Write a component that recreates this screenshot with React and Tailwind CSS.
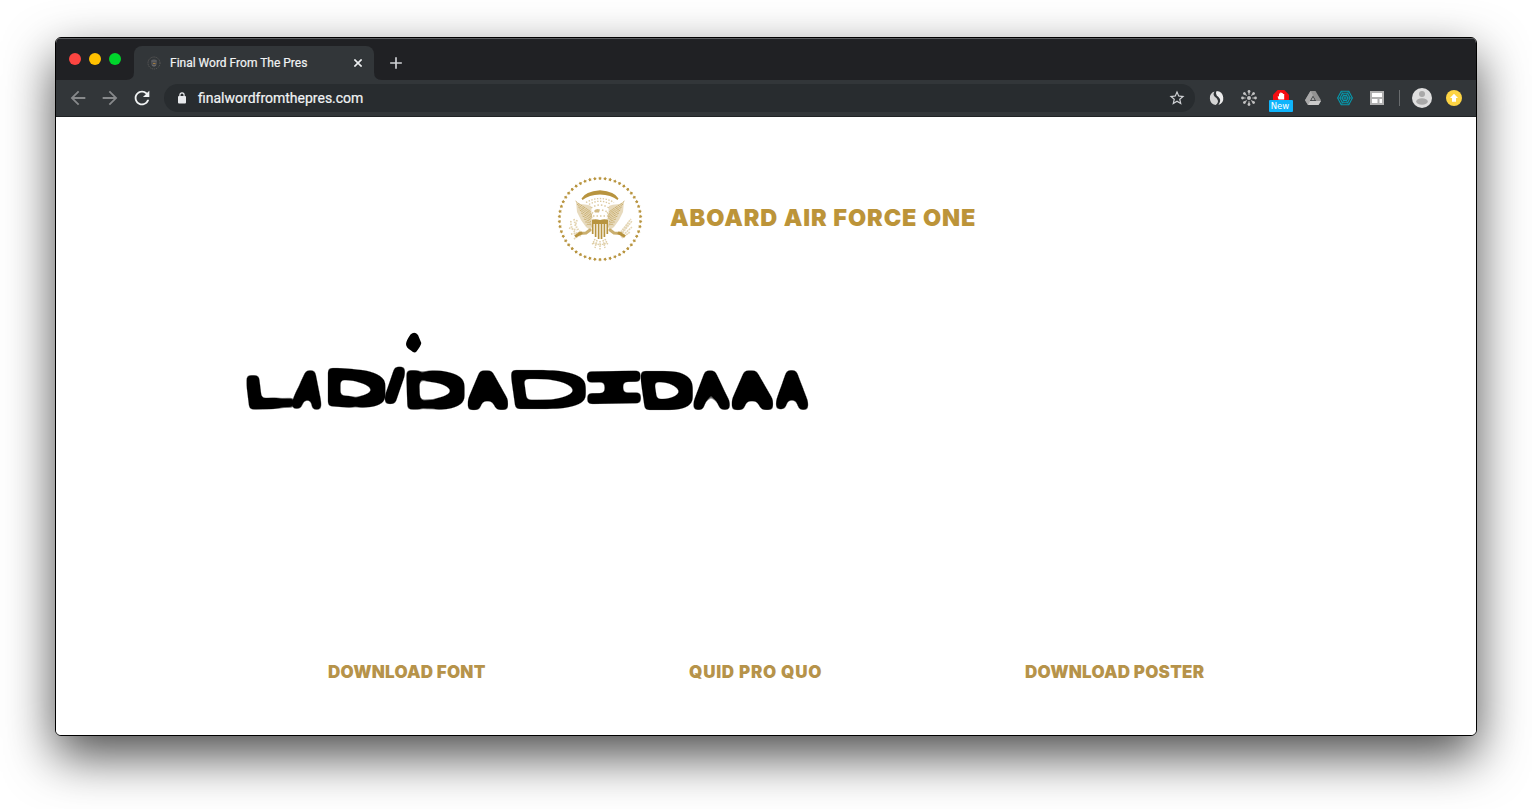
import { MdArrowBack, MdArrowForward, MdRefresh, MdStarBorder, MdAdd } from "react-icons/md";

const gold = "#b8943f";

function starPoints(cx, cy, r, turn) {
  return Array.from({ length: 10 }, (_, i) => {
    const a = turn + (i * Math.PI) / 5;
    const q = i % 2 ? r * 0.6 : r;
    return `${(cx + q * Math.sin(a)).toFixed(2)},${(cy - q * Math.cos(a)).toFixed(2)}`;
  }).join(" ");
}

function Seal() {
  const ring = Array.from({ length: 50 }, (_, i) => (i * 2 * Math.PI) / 50);
  const feathers = Array.from({ length: 9 }, (_, i) => i);
  const wing = (
    <g>
      <path d="M19 25 C22 30 29 27 34 30 L37 40 L36 49 L33 54 L29 51 L24 44 L20 36 Z" fill="#b8943f" opacity=".34" />
      {feathers.map((i) => (
        <path
          key={i}
          d={`M${18.5 + i * 1.4} ${25 + i * 3} C${23 + i} ${29 + i * 2.4} 29 ${32 + i * 2} 34 ${36 + i * 1.6}`}
          fill="none"
          stroke="#b8943f"
          strokeWidth="1"
          strokeDasharray="2.600 .5"
          opacity=".6"
        />
      ))}
      <path d="M33 54 L29 57 L22 57.500" fill="none" stroke="#b8943f" strokeWidth="3" strokeLinecap="round" opacity=".75" />
      <path d="M25 56.500 L18 60.500" stroke="#b8943f" strokeWidth="3" />
    </g>
  );
  return (
    <svg width="86" height="86" viewBox="0 0 86 86" className="block shrink-0">
      {ring.map((a) => (
        <polygon key={a} fill={gold} points={starPoints(43 + 40.6 * Math.sin(a), 43 - 40.6 * Math.cos(a), 1.9, a)} />
      ))}
      <path d="M24.500 22.500 Q28 15.500 43 14.200 Q58 15.500 61.500 22.500 L60.500 24 Q54 18.600 43 18.400 Q32 18.600 25.500 24 Z" fill={gold} />
      <path d="M29 26.500 Q43 18.500 57 26.500 M32 28.500 Q43 22 54 28.500" fill="none" stroke={gold} strokeWidth="1.3" strokeDasharray="1.4 1.5" opacity=".5" />
      {wing}
      <g transform="translate(86 0) scale(-1 1)">{wing}</g>
      <path d="M34 30 Q43 23 52 30 L51 43 H35 Z" fill="#fff" opacity=".85" />
      <path d="M34 32 Q43 26 52 32 M36 40 H51 M45 34 L51 36" fill="none" stroke={gold} strokeWidth="1.500" strokeDasharray="1.500 2" opacity=".5" />
      <path d="M37 35 Q39 32 43 33.500 L42 36.500 L38 36.500 Z" fill={gold} opacity=".65" />
      <path d="M35 42 Q33 39 36 36 M51 43 Q53 39 50 36" stroke={gold} fill="none" opacity=".5" />
      <path d="M35 44 Q38 42.500 43 44 Q48 42.500 51 44 V48.500 H35 Z" fill={gold} />
      <path d="M35 48 V57 Q37 61 43 63.500 Q49 61 51 57 V48" fill="#fff" />
      <path d="M35.700 48 V58 M38.600 48 V61 M41.600 48 V63 M44.500 48 V63 M47.400 48 V61 M50.300 48 V58" stroke={gold} strokeWidth="1.700" />
      <path d="M14 45 C13 51 17 57 24 60 M17 43 C18 49 20 54 26 58 M12 52 L20 54 M14 58 L22 57 M20 44 L18 50 M17 63 L24 58" fill="none" stroke={gold} strokeWidth="1.800" strokeDasharray="1.500 1.100" opacity=".4" />
      <path d="M62 58 L74 43 M63 59 L72 46 M64 59 L75 45 M64 61 L75 51 M65 62 L73 56" fill="none" stroke={gold} strokeWidth="1.500" strokeDasharray="2 .6" opacity=".38" />
      <path d="M38 63 L35 69 M40 64 L38 72 M43 65 V74 M46 64 L48 72 M48 63 L51 69 M36 67 Q43 70 50 67" fill="none" stroke={gold} strokeWidth="1.500" strokeDasharray="1.500 .8" opacity=".45" />
    </svg>
  );
}

// Box of each marker letter: character, left, right, top, bottom, slant and rotation in degrees.
const letters = [
  { c: "L", l: 247, r: 294, t: 374, b: 409, k: 5, w: -2 },
  { c: "A", l: 293, r: 324, t: 370, b: 410, k: -4, w: 3, thin: true },
  { c: "D", l: 327, r: 386, t: 369, b: 408, k: 4, w: 4 },
  { c: "I", l: 389, r: 401, t: 366, b: 404, k: -19, w: 0, thin: true },
  { c: "D", l: 406, r: 465, t: 370, b: 410, k: 3, w: 1 },
  { c: "A", l: 466, r: 508, t: 370, b: 410, k: 4, w: 0 },
  { c: "D", l: 512, r: 586, t: 369, b: 409, k: 8, w: 0, thin: true },
  { c: "I", l: 586, r: 642, t: 371, b: 404, k: 0, w: -1, mono: true, thin: true },
  { c: "D", l: 642, r: 693, t: 370, b: 410, k: 8, w: 0 },
  { c: "A", l: 692, r: 730, t: 370, b: 410, k: 3, w: 0, thin: true },
  { c: "A", l: 730, r: 773, t: 370, b: 410, k: 4, w: 0 },
  { c: "A", l: 775, r: 809, t: 370, b: 410, k: 3, w: 2, thin: true },
];

function inkBox(char, font) {
  const ctx = document.createElement("canvas").getContext("2d");
  ctx.font = font;
  const m = ctx.measureText(char);
  return { left: -m.actualBoundingBoxLeft, right: m.actualBoundingBoxRight, top: m.actualBoundingBoxAscent };
}

function Handwriting() {
  return (
    <svg width="590" height="130" viewBox="233 310 590 130" className="block overflow-visible">
      <filter id="marker" x="233" y="310" width="590" height="130" filterUnits="userSpaceOnUse">
        <feMorphology operator="dilate" radius="5" />
        <feGaussianBlur stdDeviation="2.200" />
        <feComponentTransfer>
          <feFuncA type="linear" slope="5" intercept="-2" />
        </feComponentTransfer>
      </filter>
      <filter id="marker-thin" x="233" y="310" width="590" height="130" filterUnits="userSpaceOnUse">
        <feMorphology operator="dilate" radius="4" />
        <feGaussianBlur stdDeviation="1.900" />
        <feComponentTransfer>
          <feFuncA type="linear" slope="5" intercept="-2" />
        </feComponentTransfer>
      </filter>
      {letters.map((g, i) => {
        const pen = g.thin ? 8.5 : 10.5;
        const family = g.mono ? "Liberation Mono" : "Roboto";
        const weight = g.mono ? 400 : 100;
        const ink = inkBox(g.c, `${weight} 100px ${family}`);
        const sx = (g.r - g.l - pen) / (ink.right - ink.left);
        const sy = (g.b - g.t - pen) / ink.top;
        const mid = (g.l + g.r) / 2;
        const cy = (g.t + g.b) / 2;
        const x = g.l + pen / 2 - ink.left * sx;
        const y = g.b - pen / 2;
        return (
          <g key={i} filter={g.thin ? "url(#marker-thin)" : "url(#marker)"}>
            <text
              fontSize="100"
              fontFamily={`${family}, sans-serif`}
              fontWeight={weight}
              fill="#000"
              transform={`translate(${mid} ${cy}) rotate(${g.w}) skewX(${g.k}) translate(${-mid} ${-cy}) translate(${x} ${y}) scale(${sx} ${sy})`}
            >
              {g.c}
            </text>
          </g>
        );
      })}
      <path d="M410.500 334.500 Q414.500 331 418 335 L421.300 343 Q421 345.500 416.500 351.500 Q414.500 353.800 411 350.500 Q406 347.500 406 344 Q406 341 410.500 334.500 Z" />
    </svg>
  );
}

function Favicon() {
  return (
    <svg width="14" height="14" viewBox="0 0 14 14" className="block">
      <circle cx="7" cy="7" r="6" fill="none" stroke="#62605e" strokeWidth="1" strokeDasharray="1 1" />
      <path d="M4 4.500 Q7 1.500 10 4.500 V8 Q9.500 10.500 7 11 Q4.500 10.500 4 8 Z" fill="#4b4c50" />
      <path d="M4.500 5 H9.500 M5 9 L7 10 L9 9" stroke="#75767a" strokeWidth=".8" fill="none" />
      <path d="M6 7.500 H8.500" stroke="#a27b3d" strokeWidth="1.200" />
    </svg>
  );
}

function Extensions() {
  return (
    <div className="flex items-center gap-4">
      <svg width="16" height="16" viewBox="0 0 16 16">
        <path d="M5.500 1.600 A6.900 6.900 0 0 0 6.500 14.900 Q9.700 13 8.800 10.200 Q8 8.300 5.800 6.800 Q3.500 4.500 5.500 1.600 Z" fill="#d4d4d4" />
        <path d="M7.600 .9 Q5.900 3.400 7.700 5.600 Q11.800 8.500 11.100 11.300 Q10.800 13.200 9.400 14.900 A7.200 7.200 0 0 0 7.600 .9 Z" fill="#ececec" />
      </svg>
      <svg width="16" height="16" viewBox="0 0 16 16" stroke="#b5b5b5" strokeWidth="1.200" fill="#c2c2c2">
        <circle cx="8" cy="8" r="2" stroke="none" />
        {[0, 45, 90, 135, 180, 225, 270, 315].map((a) => (
          <g key={a} transform={`rotate(${a} 8 8)`}>
            <path d="M8 4.700 V2" />
            <circle cx="8" cy="1.500" r="1.400" stroke="none" />
          </g>
        ))}
      </svg>
      <div className="relative h-4 w-4">
        <svg width="16" height="16" viewBox="0 0 16 16" className="block">
          <path d="M4.700 0 H11.300 L16 4.700 V11.300 L11.300 16 H4.700 L0 11.300 V4.700 Z" fill="#f40d12" />
          <path d="M5.500 9.500 L4.600 6.500 L6 6.200 V3.600 H7.200 V2.600 H8.500 V3 H9.800 V4 H11.200 V9.500 Z" fill="#fff" />
        </svg>
        <span className="absolute -left-1 top-[10px] flex h-3 w-6 items-center justify-center rounded-[1px] bg-[#0fb4fb] pr-[2px] pt-px font-['DejaVu_Sans',sans-serif] text-[8.5px] leading-none text-white">New</span>
      </div>
      <svg width="16" height="16" viewBox="0 0 16 16">
        <path d="M5.500 1 H10.500 L16 10.300 L13.500 15 H3 L0 10.300 Z" fill="#929292" />
        <path d="M5.500 1 L8 5.300 L3 15 L0 10.300 Z" fill="#a9a9a9" />
        <path d="M5 11 H16 L13.500 15 H3 Z" fill="#cacaca" />
        <path d="M8 5.700 L11 11 H5 Z" fill="#303538" />
        <path d="M8 7 L9.800 10.300 H6.200 Z" fill="#a9a9a9" />
      </svg>
      <svg width="16" height="16" viewBox="0 0 16 16" fill="none" stroke="#0799ad" strokeWidth="1.100">
        <path d="M4.200 1.200 H11.800 L15.400 8 L11.800 14.800 H4.200 L.6 8 Z M5.300 3.300 H10.700 L13 8 L10.700 12.700 H5.300 L3 8 Z M6.500 5.400 H9.500 L10.900 8 L9.500 10.600 H6.500 L5.100 8 Z" />
        <path d="M.6 8 H15.400 M4.200 1.200 L11.800 14.800 M11.800 1.200 L4.200 14.800" strokeWidth=".7" />
      </svg>
      <svg width="16" height="16" viewBox="0 0 16 16">
        <path d="M1 1 H15 V15 H1 Z" fill="#b0b0b0" />
        <path d="M3 3 H13 V7 H3 Z M3 9 H8.500 V13 H3 Z M10.500 9 H13 V13 H10.500 Z" fill="#fff" />
      </svg>
    </div>
  );
}

export default function App() {
  return (
    <div className="h-[809px] w-[1532px] overflow-hidden bg-white pl-[55px] pt-[37px]">
      <div className="flex h-[699px] w-[1422px] flex-col overflow-hidden rounded-[6px] border border-black bg-white shadow-[0_20px_50px_rgba(0,0,0,0.7)]">
        <div className="flex h-[42px] shrink-0 border-t border-[#5b5d60] bg-[#202124]">
          <div className="flex w-[70px] gap-2 pl-[13px] pt-[14px]">
            <span className="h-3 w-3 shrink-0 rounded-full bg-[#fc4541]" />
            <span className="h-3 w-3 shrink-0 rounded-full bg-[#ffc100]" />
            <span className="h-3 w-3 shrink-0 rounded-full bg-[#00d52c]" />
          </div>
          <div className="flex items-end">
            <svg width="8" height="8" className="block"><path d="M8 0 V8 H0 Q8 8 8 0" fill="#323639" /></svg>
            <div className="flex h-[34px] w-[240px] items-center rounded-t-lg bg-[#323639] pl-[13px] pr-[12px]">
              <Favicon />
              <span className="ml-[9px] whitespace-nowrap font-[Roboto,sans-serif] text-[12px] text-[#f1f3f4] [-webkit-text-stroke:0.2px]">Final Word From The Pres</span>
              <svg width="8" height="8" viewBox="0 0 8 8" className="ml-auto block">
                <path d="M.4 .4 L7.600 7.600 M7.600 .4 L.4 7.600" stroke="#eceef0" strokeWidth="1.600" />
              </svg>
            </div>
            <svg width="8" height="8" className="block"><path d="M0 0 V8 H8 Q0 8 0 0" fill="#323639" /></svg>
          </div>
          <MdAdd className="ml-[4px] mt-[14px] text-[#d0d2d5]" size={20} />
        </div>
        <div className="flex h-[37px] shrink-0 items-center border-b border-[#202325] bg-[#323639] pl-[11px]">
          <div className="flex w-[96px] gap-[10px]">
            <MdArrowBack size={22} className="text-[#87898b]" />
            <MdArrowForward size={22} className="text-[#87898b]" />
            <MdRefresh size={22} className="text-[#f1f3f4]" />
          </div>
          <div className="ml-[1px] flex h-7 w-[1031px] items-center rounded-full bg-[#282c2f] pl-[14px] pr-[9px]">
            <svg width="8" height="12" viewBox="0 0 8 12" className="shrink-0">
              <rect x="0" y="4" width="8" height="7.500" rx="1" fill="#e8eaed" />
              <path d="M1.900 4.500 V3 A2.100 2.100 0 0 1 6.100 3 V4.500" fill="none" stroke="#e8eaed" strokeWidth="1.200" />
            </svg>
            <span className="ml-[12px] font-[Roboto,sans-serif] text-[14px] text-[#f1f3f4] [-webkit-text-stroke:0.2px]">finalwordfromthepres.com</span>
            <MdStarBorder size={18} className="ml-auto text-[#d0d2d5]" />
          </div>
          <div className="ml-[14px]"><Extensions /></div>
          <div className="ml-[14px] h-4 w-px bg-[#696c6e]" />
          <svg width="20" height="20" viewBox="0 0 20 20" className="ml-[12px]">
            <circle cx="10" cy="10" r="10" fill="#dfdfdf" />
            <circle cx="10" cy="6" r="3" fill="#a9a9a9" />
            <ellipse cx="10" cy="13.500" rx="5.800" ry="3.200" fill="#a9a9a9" />
          </svg>
          <svg width="16" height="16" viewBox="0 0 16 16" className="ml-[14px]">
            <circle cx="8" cy="8" r="8" fill="#fdd444" />
            <path d="M8 3.800 L12 8 H10 V11.700 H6 V8 H4 Z" fill="#fff" />
          </svg>
        </div>
        <main className="flex min-h-0 grow flex-col bg-white font-[Inter,sans-serif]">
          <header className="flex items-center pl-[501px] pt-[59px]">
            <Seal />
            <h1 className="ml-[27px] whitespace-nowrap pb-[3px] text-[23.5px] font-black leading-none tracking-[0.9px] text-[#bc9439]">ABOARD AIR FORCE ONE</h1>
          </header>
          <div className="pl-[177px] pt-[48px]"><Handwriting /></div>
          <nav className="mt-auto flex pb-[54px] pl-[272px] text-[17px] font-black leading-[18px] tracking-[0.22px] text-[#b6934a]">
            <a className="w-[361px] whitespace-nowrap">DOWNLOAD FONT</a>
            <a className="w-[336px] whitespace-nowrap tracking-[0.75px]">QUID PRO QUO</a>
            <a className="whitespace-nowrap">DOWNLOAD POSTER</a>
          </nav>
        </main>
      </div>
    </div>
  );
}
